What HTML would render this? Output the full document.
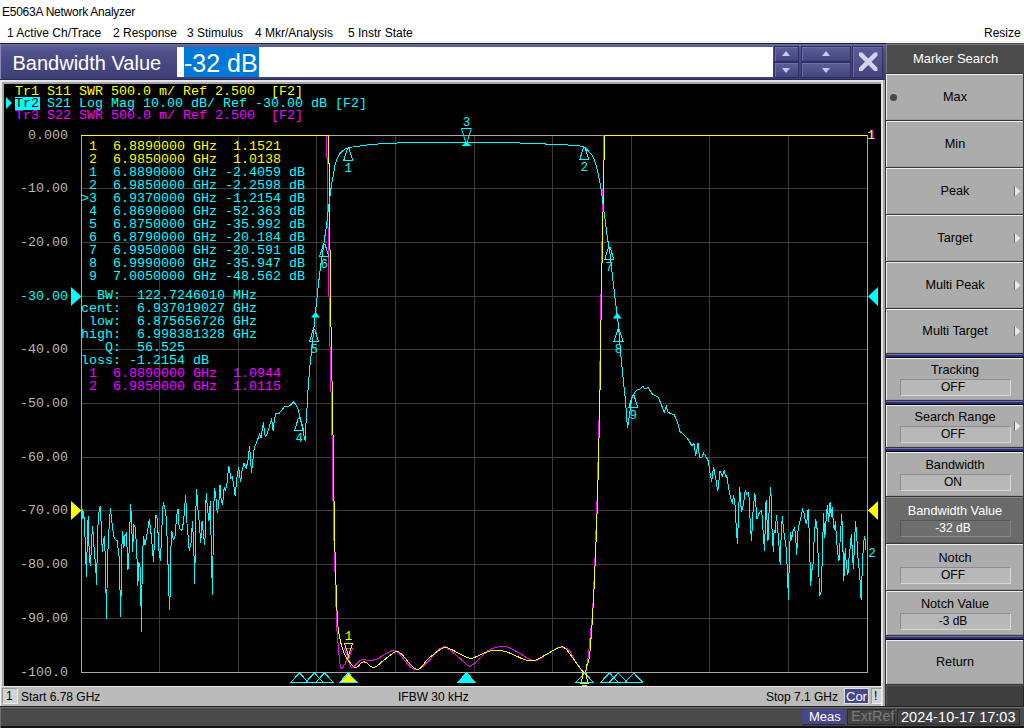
<!DOCTYPE html>
<html><head><meta charset="utf-8">
<style>
*{margin:0;padding:0;box-sizing:border-box}
html,body{width:1024px;height:728px;overflow:hidden;background:#fff;font-family:"Liberation Sans",sans-serif}
.a{position:absolute;white-space:pre}
#bar{position:absolute;left:0;top:43px;width:886px;height:37px;background:linear-gradient(#7070a8 0,#5c5c96 2px,#50508a 8px,#3e3e76 100%);border-top:1px solid #1a1a2a;border-bottom:1px solid #2a2a5a;box-shadow:inset 1px 0 0 #8a8abf}
.sp{position:absolute;background:linear-gradient(#5c5c98,#44447e);border:1px solid #2e2e60;box-shadow:inset 1px 1px 0 #6e6eaa}
.tri-u{position:absolute;width:0;height:0;border-left:4px solid transparent;border-right:4px solid transparent;border-bottom:5px solid #c8c8ea}
.tri-d{position:absolute;width:0;height:0;border-left:4px solid transparent;border-right:4px solid transparent;border-top:5px solid #c8c8ea}
#frame{position:absolute;left:0;top:79px;width:886px;height:628px;background:#e6e6e6}
#chart{position:absolute;left:4px;top:84px;width:877px;height:602px;background:#000;overflow:hidden}
#status{position:absolute;left:0;top:686px;width:881px;height:20px;background:#bbbbbb;border-top:1px solid #e8e8e8;border-left:1px solid #f4f4f4}
#bottom{position:absolute;left:0;top:706px;width:1024px;height:22px;background:#4a4a4a;border-top:1px solid #202020;box-shadow:inset 0 1px 0 #6e6e6e, inset 1px 0 0 #707070, inset 0 -2px 0 #141414}
#panel{position:absolute;left:886px;top:43px;width:138px;height:663px;background:#454545}
.btn{position:absolute;left:0;width:137px;background:#a9a9a9;border-top:1px solid #e0e0e0;border-left:1px solid #d8d8d8;border-bottom:2px solid #303030;border-right:1px solid #303030;color:#000;font-size:13px;text-align:center}
.sep{position:absolute;left:0;width:138px;height:5px;background:#4a4a98;border-top:1px solid #1a1a30;border-bottom:1px solid #1a1a30}
.val{position:absolute;left:14px;width:110px;height:17px;background:#b8b8b8;border-top:1px solid #8c8c8c;border-left:1px solid #8c8c8c;border-bottom:1px solid #d4d4d4;border-right:1px solid #d4d4d4;font-size:13px;line-height:15px;text-align:center}
.arr{position:absolute;right:3px;width:0;height:0;border-top:5px solid transparent;border-bottom:5px solid transparent;border-left:7px solid #e8e8e8}
</style></head><body>
<div class="a" style="left:2px;top:5px;font-size:12px;letter-spacing:-0.25px;color:#000">E5063A Network Analyzer</div>
<div class="a" style="left:7px;top:26px;font-size:12px;color:#000">1 Active Ch/Trace</div>
<div class="a" style="left:113px;top:26px;font-size:12px;color:#000">2 Response</div>
<div class="a" style="left:187px;top:26px;font-size:12px;color:#000">3 Stimulus</div>
<div class="a" style="left:255px;top:26px;font-size:12px;color:#000">4 Mkr/Analysis</div>
<div class="a" style="left:348px;top:26px;font-size:12px;color:#000">5 Instr State</div>
<div class="a" style="left:984px;top:26px;font-size:12px;color:#000">Resize</div>
<div style="position:absolute;left:0;top:41px;width:1024px;height:1px;background:#ececec"></div><div style="position:absolute;left:0;top:43px;width:1024px;height:1px;background:#101010"></div>

<div id="frame"></div>
<div style="position:absolute;left:2px;top:82px;width:879px;height:604px;background:#a6a6a6"></div>
<div style="position:absolute;left:883px;top:80px;width:2px;height:626px;background:#a6a6a6"></div>
<div style="position:absolute;left:885px;top:78px;width:1px;height:628px;background:#303030"></div>
<div id="bar"></div>
<div class="a" style="left:12.5px;top:51.5px;font-size:20px;color:#fff">Bandwidth Value</div>
<div style="position:absolute;left:177px;top:47px;width:596px;height:30px;background:#fff"></div>
<div style="position:absolute;left:184px;top:47px;width:75px;height:30px;background:#0078d7"></div>
<div class="a" style="left:184px;top:49px;font-size:25px;color:#fff">-32 dB</div>
<div class="sp" style="left:774px;top:46px;width:25px;height:16px"></div>
<div class="sp" style="left:774px;top:62px;width:25px;height:16px"></div>
<div class="sp" style="left:801px;top:46px;width:50px;height:16px"></div>
<div class="sp" style="left:801px;top:62px;width:50px;height:16px"></div>
<div class="tri-u" style="left:782px;top:51px"></div>
<div class="tri-d" style="left:782px;top:68px"></div>
<div class="tri-u" style="left:821.5px;top:51px"></div>
<div class="tri-d" style="left:821.5px;top:68px"></div>
<div class="sp" style="left:852px;top:46px;width:31px;height:32px"></div>
<svg style="position:absolute;left:852px;top:46px" width="31" height="32"><path d="M7 6.5H10.2L25.5 21.8V25H22.3L7 9.7Z M22.3 6.5H25.5V9.7L10.2 25H7V21.8Z" fill="#d4d4ee"/></svg>

<svg style="position:absolute;left:4px;top:84px" width="877" height="602" viewBox="4 84 877 602">
<rect x="4" y="84" width="877" height="602" fill="#000"/>
<path d="M159.5 135V672 M238.5 135V672 M316.5 135V672 M395.5 135V672 M474.5 135V672 M552.5 135V672 M631.5 135V672 M709.5 135V672 M788.5 135V672 M81 188.5H867 M81 242.5H867 M81 296.5H867 M81 349.5H867 M81 403.5H867 M81 457.5H867 M81 510.5H867 M81 564.5H867 M81 618.5H867" stroke="#3c3c3c" stroke-width="1" fill="none" shape-rendering="crispEdges"/>
<rect x="81.5" y="135.5" width="786" height="537" stroke="#a8a8a8" stroke-width="1" fill="none" shape-rendering="crispEdges"/>
<text x="68" y="139" text-anchor="end" fill="#b8b8b8" font-family="Liberation Mono" font-size="13.33">0.000</text>
<text x="68" y="192" text-anchor="end" fill="#b8b8b8" font-family="Liberation Mono" font-size="13.33">-10.00</text>
<text x="68" y="246" text-anchor="end" fill="#b8b8b8" font-family="Liberation Mono" font-size="13.33">-20.00</text>
<text x="68" y="300" text-anchor="end" fill="#00ffff" font-family="Liberation Mono" font-size="13.33">-30.00</text>
<text x="68" y="353" text-anchor="end" fill="#b8b8b8" font-family="Liberation Mono" font-size="13.33">-40.00</text>
<text x="68" y="407" text-anchor="end" fill="#b8b8b8" font-family="Liberation Mono" font-size="13.33">-50.00</text>
<text x="68" y="461" text-anchor="end" fill="#b8b8b8" font-family="Liberation Mono" font-size="13.33">-60.00</text>
<text x="68" y="514" text-anchor="end" fill="#b8b8b8" font-family="Liberation Mono" font-size="13.33">-70.00</text>
<text x="68" y="568" text-anchor="end" fill="#b8b8b8" font-family="Liberation Mono" font-size="13.33">-80.00</text>
<text x="68" y="622" text-anchor="end" fill="#b8b8b8" font-family="Liberation Mono" font-size="13.33">-90.00</text>
<text x="68" y="676" text-anchor="end" fill="#b8b8b8" font-family="Liberation Mono" font-size="13.33">-100.0</text>
<rect x="15" y="97" width="25" height="13" fill="#00ffff"/>
<path d="M6 97L12 103L6 109Z" fill="#00ffff"/>
<text x="15" y="95" fill="#ffff00" font-family="Liberation Mono" font-size="13.33" xml:space="preserve">Tr1 S11 SWR 500.0 m/ Ref 2.500  [F2]</text>
<text x="15" y="107" fill="#000" font-family="Liberation Mono" font-size="13.33" xml:space="preserve">Tr2</text>
<text x="15" y="107" fill="#00ffff" font-family="Liberation Mono" font-size="13.33" xml:space="preserve">    S21 Log Mag 10.00 dB/ Ref -30.00 dB [F2]</text>
<text x="15" y="119" fill="#ff00ff" font-family="Liberation Mono" font-size="13.33" xml:space="preserve">Tr3 S22 SWR 500.0 m/ Ref 2.500  [F2]</text>
<text x="81" y="150.0" fill="#ffff00" font-family="Liberation Mono" font-size="13.33" xml:space="preserve"> 1  6.8890000 GHz  1.1521</text>
<text x="81" y="162.9" fill="#ffff00" font-family="Liberation Mono" font-size="13.33" xml:space="preserve"> 2  6.9850000 GHz  1.0138</text>
<text x="81" y="175.9" fill="#00ffff" font-family="Liberation Mono" font-size="13.33" xml:space="preserve"> 1  6.8890000 GHz -2.4059 dB</text>
<text x="81" y="188.8" fill="#00ffff" font-family="Liberation Mono" font-size="13.33" xml:space="preserve"> 2  6.9850000 GHz -2.2598 dB</text>
<text x="81" y="201.8" fill="#00ffff" font-family="Liberation Mono" font-size="13.33" xml:space="preserve">>3  6.9370000 GHz -1.2154 dB</text>
<text x="81" y="214.8" fill="#00ffff" font-family="Liberation Mono" font-size="13.33" xml:space="preserve"> 4  6.8690000 GHz -52.363 dB</text>
<text x="81" y="227.7" fill="#00ffff" font-family="Liberation Mono" font-size="13.33" xml:space="preserve"> 5  6.8750000 GHz -35.992 dB</text>
<text x="81" y="240.6" fill="#00ffff" font-family="Liberation Mono" font-size="13.33" xml:space="preserve"> 6  6.8790000 GHz -20.184 dB</text>
<text x="81" y="253.6" fill="#00ffff" font-family="Liberation Mono" font-size="13.33" xml:space="preserve"> 7  6.9950000 GHz -20.591 dB</text>
<text x="81" y="266.6" fill="#00ffff" font-family="Liberation Mono" font-size="13.33" xml:space="preserve"> 8  6.9990000 GHz -35.947 dB</text>
<text x="81" y="279.5" fill="#00ffff" font-family="Liberation Mono" font-size="13.33" xml:space="preserve"> 9  7.0050000 GHz -48.562 dB</text>
<text x="81" y="299.0" fill="#00ffff" font-family="Liberation Mono" font-size="13.33" xml:space="preserve">  BW:  122.7246010 MHz</text>
<text x="81" y="311.9" fill="#00ffff" font-family="Liberation Mono" font-size="13.33" xml:space="preserve">cent:  6.937019027 GHz</text>
<text x="81" y="324.9" fill="#00ffff" font-family="Liberation Mono" font-size="13.33" xml:space="preserve"> low:  6.875656726 GHz</text>
<text x="81" y="337.8" fill="#00ffff" font-family="Liberation Mono" font-size="13.33" xml:space="preserve">high:  6.998381328 GHz</text>
<text x="81" y="350.7" fill="#00ffff" font-family="Liberation Mono" font-size="13.33" xml:space="preserve">   Q:  56.525</text>
<text x="81" y="363.6" fill="#00ffff" font-family="Liberation Mono" font-size="13.33" xml:space="preserve">loss: -1.2154 dB</text>
<text x="81" y="376.6" fill="#ff00ff" font-family="Liberation Mono" font-size="13.33" xml:space="preserve"> 1  6.8890000 GHz  1.0944</text>
<text x="81" y="389.5" fill="#ff00ff" font-family="Liberation Mono" font-size="13.33" xml:space="preserve"> 2  6.9850000 GHz  1.0115</text>
<path d="M71 287L81.5 296.5L71 306Z" fill="#00ffff"/>
<path d="M878 287L868 296.5L878 306Z" fill="#00ffff"/>
<path d="M71 501L81.5 510.5L71 520Z" fill="#ffff00"/>
<path d="M878 501L868 510.5L878 520Z" fill="#ffff00"/>
<polyline points="81.0,135.5 326.7,135.5 329.2,310.0 332.1,440.0 332.2,447.3 332.3,457.4 332.5,469.3 332.7,482.1 332.9,494.6 333.1,506.0 333.3,516.3 333.6,526.5 333.9,536.5 334.2,546.3 334.5,555.9 334.8,565.3 335.1,574.8 335.3,584.3 335.6,593.7 335.9,602.6 336.1,610.8 336.4,618.0 336.7,624.0 336.9,628.9 337.2,633.0 337.5,636.8 337.8,640.5 338.1,644.4 338.5,648.7 338.8,653.3 339.3,657.8 339.7,661.9 340.2,665.2 340.7,667.5 341.3,668.5 342.0,668.5 342.7,667.7 343.4,666.5 344.1,665.2 344.7,664.2 345.3,663.1 345.9,661.6 346.4,660.1 346.9,658.7 347.5,657.8 348.0,657.6 348.5,658.5 349.0,660.2 349.4,662.4 350.0,664.7 350.6,666.5 351.3,667.5 352.2,667.5 353.3,666.9 354.5,665.9 355.8,664.6 356.9,663.5 357.9,662.6 358.7,661.9 359.3,661.3 359.9,660.7 360.5,660.2 361.1,659.9 362.0,659.6 363.1,659.6 364.3,659.7 365.7,660.0 367.1,660.3 368.5,660.5 369.8,660.5 371.1,660.4 372.3,660.3 373.5,660.0 374.8,659.7 376.2,659.2 377.7,658.6 379.5,657.7 381.5,656.4 383.6,655.1 385.6,653.7 387.6,652.6 389.4,651.8 390.8,651.2 391.9,650.6 392.8,650.2 393.9,650.2 395.3,650.7 397.2,651.8 399.7,654.2 402.7,658.0 406.0,662.2 409.5,666.1 413.1,669.0 416.7,669.9 420.6,668.4 424.8,664.9 429.2,660.3 433.4,655.4 437.1,651.2 440.2,648.4 442.4,647.1 443.8,646.6 444.8,646.6 445.7,647.2 446.6,647.9 448.0,648.8 449.8,649.9 451.8,651.5 454.0,653.3 456.2,655.2 458.2,657.0 460.0,658.6 461.6,660.0 463.1,661.3 464.4,662.6 465.6,663.7 466.8,664.7 467.8,665.4 468.6,665.9 469.2,666.2 469.8,666.2 470.3,666.2 470.9,665.9 471.7,665.4 472.8,664.7 473.9,663.7 475.2,662.5 476.6,661.3 478.0,659.9 479.5,658.6 481.0,657.2 482.6,655.6 484.3,654.0 486.0,652.4 487.6,650.9 489.3,649.8 491.0,648.9 492.6,648.3 494.3,647.8 496.0,647.4 497.6,647.1 499.1,646.9 500.5,646.7 501.7,646.5 502.9,646.4 504.1,646.4 505.4,646.5 506.9,646.9 508.6,647.5 510.6,648.4 512.6,649.4 514.7,650.5 516.7,651.7 518.6,652.7 520.4,653.7 522.1,654.8 523.7,655.9 525.4,656.9 526.9,657.8 528.4,658.6 529.8,659.2 531.0,659.9 532.2,660.3 533.4,660.7 534.7,660.7 536.2,660.5 537.9,659.9 539.9,658.8 541.9,657.6 544.0,656.2 546.0,654.9 547.9,653.7 549.7,652.6 551.5,651.5 553.2,650.4 554.8,649.4 556.3,648.5 557.7,647.9 558.9,647.5 559.9,647.4 560.8,647.4 561.7,647.5 562.6,647.7 563.5,647.9 564.5,648.1 565.4,648.3 566.3,648.5 567.3,648.9 568.3,649.7 569.4,650.8 570.6,652.5 571.9,654.8 573.2,657.3 574.5,660.0 575.9,662.4 577.2,664.5 578.6,666.4 580.0,668.3 581.4,670.1 582.8,671.5 584.0,672.3 585.0,672.3 585.8,671.4 586.3,669.9 586.8,667.8 587.1,665.1 587.5,662.0 587.9,658.6 588.4,654.6 588.9,650.0 589.4,644.9 589.9,639.6 590.4,634.4 590.9,629.3 591.3,625.1 591.7,621.9 592.0,618.6 592.4,614.4 592.7,608.5 593.2,600.0 593.7,588.4 594.3,574.4 595.0,558.7 595.6,541.9 596.2,524.8 596.8,508.0 597.3,490.2 597.8,470.4 598.3,450.2 598.8,431.4 599.1,415.5 599.4,404.0 600.9,300.0 604.0,135.5 867.0,135.5" stroke="#ff00ff" stroke-width="1" fill="none" shape-rendering="crispEdges"/>
<polyline points="81.0,135.5 328.7,135.5 330.7,310.0 333.1,440.0 333.2,447.3 333.3,457.4 333.5,469.3 333.7,482.1 333.9,494.6 334.1,506.0 334.3,516.3 334.5,526.5 334.7,536.5 334.9,546.3 335.1,555.9 335.4,565.3 335.7,574.8 336.0,584.6 336.3,594.1 336.7,603.1 337.0,611.2 337.4,618.0 337.7,623.2 338.0,627.2 338.4,630.2 338.7,632.7 339.2,635.1 339.7,637.8 340.4,640.8 341.1,643.8 341.9,646.7 342.8,649.4 343.7,652.0 344.7,654.3 345.7,656.4 346.8,658.3 348.0,660.1 349.2,661.6 350.3,663.0 351.3,664.2 352.2,665.2 353.0,666.1 353.8,666.8 354.6,667.3 355.4,667.5 356.2,667.5 357.1,667.1 358.1,666.3 359.2,665.2 360.2,664.1 361.1,663.1 362.0,662.5 362.7,662.2 363.3,661.9 363.8,661.9 364.4,662.0 365.0,662.2 365.9,662.5 367.0,663.2 368.2,664.2 369.5,665.4 370.9,666.5 372.3,667.2 373.8,667.4 375.3,667.0 376.8,666.0 378.4,664.8 380.1,663.4 381.7,661.9 383.5,660.5 385.4,659.0 387.5,657.3 389.6,655.6 391.7,654.0 393.6,652.7 395.2,651.8 396.4,651.3 397.2,651.1 397.9,651.2 398.6,651.7 399.6,652.5 401.1,653.7 403.2,655.8 405.7,658.9 408.5,662.3 411.4,665.5 414.2,668.1 416.7,669.3 418.9,669.0 420.8,667.7 422.7,665.6 424.5,663.1 426.4,660.7 428.4,658.6 430.6,656.7 433.0,654.8 435.5,652.8 437.9,651.0 440.1,649.5 442.1,648.4 443.6,647.8 444.8,647.4 445.8,647.4 446.8,647.7 448.1,648.1 449.9,648.8 452.4,649.9 455.4,651.5 458.7,653.3 462.0,655.1 465.0,656.6 467.5,657.6 469.4,658.1 470.8,658.3 471.9,658.2 473.0,657.9 474.2,657.5 475.6,657.0 477.4,656.4 479.3,655.5 481.3,654.4 483.4,653.4 485.4,652.5 487.3,651.8 489.0,651.3 490.6,650.9 492.2,650.6 493.8,650.5 495.4,650.4 497.1,650.4 498.9,650.5 500.7,650.7 502.6,651.0 504.5,651.5 506.6,652.0 508.8,652.7 511.3,653.7 514.0,654.9 516.8,656.2 519.6,657.6 522.2,658.7 524.5,659.6 526.4,660.2 528.1,660.6 529.6,660.8 531.0,660.9 532.5,660.8 534.2,660.5 536.0,659.9 537.9,659.1 539.8,658.1 541.8,657.0 543.8,655.8 545.9,654.7 548.2,653.5 550.6,652.0 553.1,650.5 555.5,649.2 557.7,648.0 559.6,647.3 561.0,646.9 562.1,646.8 562.9,647.0 563.7,647.4 564.5,648.0 565.5,648.8 566.7,649.9 568.0,651.4 569.3,653.1 570.6,655.0 572.0,656.8 573.3,658.6 574.6,660.4 576.0,662.4 577.4,664.4 578.8,666.3 580.0,668.0 581.1,669.3 582.0,670.4 582.8,671.3 583.4,672.0 584.0,672.4 584.5,672.5 585.0,672.3 585.4,671.6 585.8,670.6 586.1,669.2 586.4,667.6 586.7,666.0 587.0,664.5 587.4,663.5 587.8,663.0 588.2,662.5 588.6,661.3 589.1,659.0 589.6,654.9 590.2,649.1 590.7,642.2 591.4,634.1 592.0,624.8 592.7,614.3 593.3,602.7 594.0,589.6 594.6,574.9 595.3,559.0 596.0,542.4 596.6,525.5 597.2,508.8 597.7,490.8 598.3,470.9 598.7,450.7 599.2,431.9 599.5,415.9 599.8,404.4 601.3,300.0 604.5,135.5 867.0,135.5" stroke="#ffff00" stroke-width="1" fill="none" shape-rendering="crispEdges"/>
<polyline points="81.1,510.6 81.7,525.1 82.5,509.6 83.8,513.7 84.8,531.2 85.8,560.1 86.7,576.6 87.3,531.2 88.3,515.8 89.3,558.0 90.4,566.3 91.4,547.7 92.4,526.1 93.5,537.4 94.5,556.0 95.5,562.2 96.6,584.8 97.6,533.3 98.6,513.7 100.3,506.1 101.1,523.0 102.3,551.9 103.2,541.5 104.4,536.4 105.4,560.1 106.5,618.9 107.5,560.1 108.9,531.2 110.4,508.1 112.0,523.0 113.5,535.4 115.1,539.5 117.2,540.5 119.2,558.0 120.7,616.8 121.7,549.8 122.7,531.2 123.8,547.7 125.0,535.4 126.5,533.3 127.9,570.4 129.1,551.9 130.6,504.0 131.6,520.9 132.6,551.9 133.7,525.1 135.3,527.1 136.8,551.9 137.8,585.9 138.8,562.2 140.3,568.4 141.5,632.3 142.3,558.0 143.6,536.4 145.0,544.6 146.5,537.4 148.1,527.1 149.3,518.9 150.6,529.2 152.2,545.7 153.5,562.2 154.7,533.3 155.9,514.7 157.4,518.9 158.8,549.8 160.5,561.1 161.7,531.2 163.2,502.4 164.6,506.5 166.2,516.8 167.7,551.9 168.7,591.0 169.8,609.6 170.8,549.8 171.8,531.2 173.3,539.5 174.9,537.4 176.6,516.8 178.0,508.6 178.7,523.4 180.1,528.9 182.0,530.3 183.7,520.7 185.6,494.6 187.0,523.4 188.4,539.9 189.2,550.9 191.1,542.6 192.5,520.7 193.9,550.9 194.7,583.8 195.8,512.4 196.6,489.1 198.0,509.7 199.4,523.4 200.7,542.6 202.1,520.7 203.5,534.4 204.8,545.4 206.2,493.2 207.6,509.7 209.0,520.7 210.3,501.4 211.7,567.4 212.5,594.8 213.6,512.4 214.5,487.7 215.8,495.9 217.2,512.4 218.6,506.9 220.0,484.9 221.3,501.4 222.7,504.2 224.1,487.7 225.5,490.4 226.8,484.9 228.7,465.7 230.9,478.1 232.3,476.7 233.7,484.9 235.1,495.9 237.0,476.7 238.6,467.1 240.6,482.2 241.9,471.2 244.1,463.0 246.1,468.5 248.0,460.2 249.6,446.5 251.5,472.6 254.3,447.3 255.8,444.4 258.7,436.7 259.6,434.3 261.1,438.2 262.0,431.0 263.5,422.3 264.4,432.4 265.4,436.2 266.8,434.3 269.2,427.1 271.6,418.5 273.1,430.5 274.0,423.3 275.5,413.7 279.3,413.2 284.6,406.4 289.4,406.0 293.8,401.6 298.1,408.8 300.0,417.5 302.4,427.1 303.8,434.8 305.3,440.6 305.8,426.2 307.2,405.0 307.7,394.4 309.9,366.0 312.0,347.4 314.0,326.8 315.5,312.4 318.5,283.3 318.8,281.1 319.2,278.1 319.6,274.5 320.1,270.7 320.6,266.9 321.0,263.5 321.4,260.5 321.8,257.6 322.3,254.7 322.7,251.9 323.1,249.1 323.5,246.2 323.9,243.4 324.3,240.5 324.7,237.7 325.1,234.9 325.6,231.9 326.0,228.9 326.4,225.8 326.8,222.5 327.2,219.2 327.6,215.8 328.0,212.5 328.4,209.1 328.8,205.8 329.3,202.4 329.7,198.9 330.1,195.6 330.5,192.4 330.9,189.3 331.3,186.6 331.7,183.9 332.1,181.5 332.6,179.1 333.0,176.8 333.4,174.5 333.8,172.3 334.2,170.0 334.5,167.9 334.9,165.8 335.4,163.9 335.9,162.1 336.4,160.5 337.0,159.1 337.6,157.7 338.2,156.5 338.9,155.3 339.6,154.2 340.3,153.2 341.1,152.3 342.0,151.5 342.8,150.8 343.7,150.1 344.5,149.5 345.3,149.0 346.1,148.6 346.8,148.3 347.6,148.1 348.5,147.8 349.5,147.6 350.5,147.3 351.5,147.1 352.6,147.0 353.8,146.8 355.2,146.6 356.6,146.4 358.3,146.2 360.0,146.0 361.9,145.7 363.9,145.4 366.0,145.1 368.4,144.9 370.8,144.6 373.4,144.4 376.2,144.2 379.1,143.9 382.4,143.7 385.9,143.5 389.6,143.3 393.4,143.2 397.4,143.0 401.9,142.9 407.1,142.7 413.3,142.6 420.8,142.6 429.7,142.5 439.2,142.4 448.9,142.4 458.0,142.4 466.0,142.3 472.3,142.3 477.4,142.2 481.9,142.2 486.7,142.1 492.5,142.2 500.0,142.3 510.3,142.7 522.9,143.1 536.4,143.6 549.7,144.2 561.3,144.7 570.0,145.1 575.3,145.4 578.3,145.7 579.6,145.9 580.0,146.1 580.2,146.3 581.0,146.5 582.1,146.7 582.9,146.8 583.5,147.0 584.0,147.2 584.5,147.5 585.1,147.9 585.8,148.4 586.5,149.0 587.2,149.7 587.9,150.4 588.5,151.2 589.2,152.0 589.9,152.8 590.7,153.6 591.4,154.5 592.1,155.4 592.7,156.4 593.4,157.5 593.9,158.7 594.4,159.9 594.8,161.2 595.2,162.7 595.7,164.1 596.1,165.7 596.6,167.4 597.0,169.1 597.5,171.0 598.0,172.8 598.4,174.8 598.8,176.7 599.2,178.7 599.6,180.6 600.0,182.6 600.4,184.7 600.7,186.8 601.0,189.1 601.4,191.4 601.7,193.8 602.0,196.4 602.3,198.9 602.6,201.5 603.0,204.2 603.3,206.8 603.7,209.6 604.0,212.3 604.4,215.1 604.8,217.9 605.2,220.7 605.5,223.4 605.9,226.3 606.3,229.1 606.6,231.9 607.0,234.6 607.4,237.1 607.7,239.6 608.1,241.9 608.5,244.2 608.9,246.4 609.2,248.6 609.6,250.9 609.9,253.1 610.1,255.3 610.4,257.4 610.6,259.6 610.9,262.0 611.2,264.6 611.5,267.5 611.9,270.7 612.3,274.1 612.7,277.4 613.0,280.7 613.4,283.8 613.7,286.8 614.1,289.5 614.4,292.3 614.7,294.9 615.0,297.6 615.3,300.3 615.7,303.2 616.0,306.3 616.4,309.4 616.7,312.3 617.0,314.8 617.3,316.8 617.4,318.0 617.5,318.5 617.6,318.6 617.7,318.7 617.7,319.0 617.9,320.0 618.0,321.5 618.2,323.4 618.4,325.6 618.6,327.9 618.8,330.5 619.0,333.2 619.2,336.1 619.5,339.4 619.8,342.9 620.1,346.4 620.4,349.8 620.7,352.9 620.9,355.9 621.2,358.7 621.5,361.4 621.7,364.1 622.0,366.7 622.3,369.4 622.6,372.2 622.8,374.9 623.1,377.7 623.4,380.4 623.7,383.2 623.9,385.9 624.2,388.6 624.5,391.4 624.8,394.1 625.1,396.9 625.3,399.6 625.6,402.4 625.8,405.2 626.0,408.1 626.2,411.1 626.4,413.9 626.6,416.5 626.7,418.8 626.9,420.9 627.1,422.8 627.2,424.4 627.4,425.8 627.5,427.0 627.6,427.9 628.9,418.8 630.5,407.3 632.2,397.4 634.7,392.5 637.1,390.0 639.6,389.2 642.6,386.2 644.5,388.4 648.2,387.9 650.3,390.8 652.4,394.1 654.4,395.5 658.0,396.6 661.0,404.0 664.3,412.3 666.3,406.5 667.6,411.4 669.6,413.1 674.2,414.7 677.5,422.1 680.0,432.0 678.7,431.0 681.5,432.4 684.2,435.1 687.0,437.9 689.7,442.0 691.9,446.1 693.9,443.4 695.8,455.7 698.0,443.4 699.4,457.1 702.1,457.1 703.5,453.0 706.2,457.1 708.4,461.2 710.3,474.9 711.7,481.8 713.6,466.7 715.8,479.1 717.8,491.4 720.0,470.8 722.2,476.3 724.1,470.8 726.3,477.7 726.8,474.9 728.2,485.9 730.4,496.9 732.3,502.4 733.7,495.5 735.1,505.2 736.4,529.9 737.5,543.6 738.6,510.7 739.7,487.3 741.4,512.0 743.3,505.2 745.2,490.1 746.9,494.2 748.8,492.8 750.2,521.6 751.5,540.9 752.9,513.4 754.8,492.8 757.0,518.9 758.4,514.8 759.8,512.0 761.7,510.7 763.4,535.4 764.5,550.5 766.1,499.7 768.0,540.9 769.4,502.4 770.8,487.3 772.2,535.4 773.5,551.9 774.1,529.8 775.1,531.9 776.5,515.4 777.8,529.8 779.2,548.4 780.2,564.8 781.3,531.9 782.3,516.4 783.3,527.7 784.8,538.0 786.4,550.4 787.5,575.2 788.5,599.9 789.5,548.4 790.6,531.9 791.6,540.1 792.6,531.9 793.6,529.8 794.7,527.7 795.7,538.0 796.7,554.5 797.8,531.9 798.8,525.7 800.9,517.4 802.5,509.2 804.0,513.3 805.4,521.5 806.6,523.6 808.1,509.2 809.1,529.8 810.1,564.8 810.8,585.5 811.6,569.0 812.8,569.0 814.3,536.0 815.7,519.5 816.9,525.7 817.8,548.4 819.0,577.2 819.8,595.8 821.1,591.6 822.5,552.5 823.5,513.3 824.8,538.0 826.0,521.5 827.3,505.1 828.7,521.5 830.1,502.0 831.4,517.4 832.2,507.1 833.4,523.6 834.3,529.8 835.5,521.5 836.3,536.0 837.6,552.5 839.0,560.7 840.5,533.9 841.7,514.3 842.5,531.9 843.8,581.3 845.2,548.4 846.2,562.8 847.9,575.2 848.7,560.7 849.9,550.4 851.4,533.9 852.4,552.5 853.4,569.0 854.5,544.2 855.5,521.5 856.5,531.9 858.2,560.7 859.6,573.1 861.1,599.9 862.3,569.0 863.5,542.2 864.8,536.0 865.8,550.4" stroke="#00ffff" stroke-width="1" fill="none" shape-rendering="crispEdges"/>
<path d="M347.4 148.5H349.0L352.7 160.5H343.7Z" stroke="#00ffff" stroke-width="1" fill="none" shape-rendering="crispEdges"/><text x="348.2" y="172" text-anchor="middle" fill="#00ffff" font-family="Liberation Mono" font-size="12.5">1</text>
<path d="M583.5 147.5H585.0999999999999L588.8 159.5H579.8Z" stroke="#00ffff" stroke-width="1" fill="none" shape-rendering="crispEdges"/><text x="584.3" y="171" text-anchor="middle" fill="#00ffff" font-family="Liberation Mono" font-size="12.5">2</text>
<path d="M298.4 418.0H300.0L303.7 430.0H294.7Z" stroke="#00ffff" stroke-width="1" fill="none" shape-rendering="crispEdges"/><text x="299.2" y="441.5" text-anchor="middle" fill="#00ffff" font-family="Liberation Mono" font-size="12.5">4</text>
<path d="M313.2 329.5H314.8L318.5 341.5H309.5Z" stroke="#00ffff" stroke-width="1" fill="none" shape-rendering="crispEdges"/><text x="314" y="353" text-anchor="middle" fill="#00ffff" font-family="Liberation Mono" font-size="12.5">5</text>
<path d="M323.4 244.2H325.0L328.7 256.2H319.7Z" stroke="#00ffff" stroke-width="1" fill="none" shape-rendering="crispEdges"/><text x="324.2" y="267.7" text-anchor="middle" fill="#00ffff" font-family="Liberation Mono" font-size="12.5">6</text>
<path d="M608.5 247.3H610.0999999999999L613.8 259.3H604.8Z" stroke="#00ffff" stroke-width="1" fill="none" shape-rendering="crispEdges"/><text x="609.3" y="270.8" text-anchor="middle" fill="#00ffff" font-family="Liberation Mono" font-size="12.5">7</text>
<path d="M617.7 329.5H619.3L623.0 341.5H614.0Z" stroke="#00ffff" stroke-width="1" fill="none" shape-rendering="crispEdges"/><text x="618.5" y="353" text-anchor="middle" fill="#00ffff" font-family="Liberation Mono" font-size="12.5">8</text>
<path d="M632.5 395.5H634.0999999999999L637.8 407.5H628.8Z" stroke="#00ffff" stroke-width="1" fill="none" shape-rendering="crispEdges"/><text x="633.3" y="419" text-anchor="middle" fill="#00ffff" font-family="Liberation Mono" font-size="12.5">9</text>
<path d="M466.4 144.5L461.5 128.5H471.3Z" stroke="#00ffff" stroke-width="1" fill="none"/>
<path d="M466.4 141.5L461.5 146H471.3Z" fill="#00ffff"/>
<text x="466.4" y="126" text-anchor="middle" fill="#00ffff" font-family="Liberation Mono" font-size="12.5">3</text>
<path d="M315.5 312L311 317.5H320Z" fill="#00ffff"/>
<path d="M617.3 313L612.8 318.5H621.8Z" fill="#00ffff"/>
<path d="M348.5 659L344.5 648.5H352.5Z" stroke="#ff00ff" stroke-width="1" fill="none" shape-rendering="crispEdges"/>
<path d="M348.5 656L344.5 643H352.5Z" stroke="#ffff00" stroke-width="1" fill="none" shape-rendering="crispEdges"/>
<text x="348.5" y="640" text-anchor="middle" fill="#ffff00" font-family="Liberation Mono" font-size="12.5">1</text>
<text x="872" y="139" text-anchor="middle" fill="#ff00ff" font-family="Liberation Mono" font-size="12.5">1</text>
<text x="871" y="139" text-anchor="middle" fill="#ffff00" font-family="Liberation Mono" font-size="12.5">1</text>
<text x="872" y="557" text-anchor="middle" fill="#00ffff" font-family="Liberation Mono" font-size="12.5">2</text>
<path d="M299.5 673L290.5 682.5H308.5Z" stroke="#00ffff" stroke-width="1" fill="none" shape-rendering="crispEdges"/>
<path d="M314.4 673L305.4 682.5H323.4Z" stroke="#00ffff" stroke-width="1" fill="none" shape-rendering="crispEdges"/>
<path d="M324.5 673L315.5 682.5H333.5Z" stroke="#00ffff" stroke-width="1" fill="none" shape-rendering="crispEdges"/>
<path d="M609.4 673L600.4 682.5H618.4Z" stroke="#00ffff" stroke-width="1" fill="none" shape-rendering="crispEdges"/>
<path d="M618.2 673L609.2 682.5H627.2Z" stroke="#00ffff" stroke-width="1" fill="none" shape-rendering="crispEdges"/>
<path d="M633.8 673L624.8 682.5H642.8Z" stroke="#00ffff" stroke-width="1" fill="none" shape-rendering="crispEdges"/>
<path d="M584.6 673L575.6 682.5H593.6Z" stroke="#00ffff" stroke-width="1" fill="none" shape-rendering="crispEdges"/>
<path d="M583 673L581.5 682.5M586 673L587.5 682.5M580 683.5H589" stroke="#ffff00" stroke-width="1" fill="none" shape-rendering="crispEdges"/>
<path d="M582 685.5H587" stroke="#ffc040" stroke-width="1" fill="none"/>
<path d="M348.4 673L339.4 682.5H357.4Z" stroke="#00ffff" stroke-width="1" fill="#ffff00" shape-rendering="crispEdges"/>
<path d="M466.5 673L457.5 682.5H475.5Z" stroke="#00ffff" stroke-width="1" fill="#00ffff" shape-rendering="crispEdges"/>
</svg>
<div id="status"></div>
<div style="position:absolute;left:2px;top:688px;width:16px;height:16px;background:#d2d2d2;border-top:1px solid #9a9a9a;border-left:1px solid #9a9a9a;border-bottom:1px solid #eeeeee;border-right:1px solid #eeeeee"></div>
<div class="a" style="left:6px;top:689px;font-size:12px;color:#000">1</div>
<div class="a" style="left:21px;top:690px;font-size:12px;color:#000">Start 6.78 GHz</div>
<div class="a" style="left:398px;top:690px;font-size:12px;color:#000">IFBW 30 kHz</div>
<div class="a" style="left:766px;top:690px;font-size:12px;color:#000">Stop 7.1 GHz</div>
<div style="position:absolute;left:844px;top:688px;width:25px;height:16px;background:#46468c;border:1px solid #e0e0e0"></div>
<div class="a" style="left:846px;top:689px;font-size:13px;color:#fff">Cor</div>
<div style="position:absolute;left:871px;top:688px;width:11px;height:16px;background:#d2d2d2;border-top:1px solid #9a9a9a;border-left:1px solid #9a9a9a;border-bottom:1px solid #eeeeee;border-right:1px solid #eeeeee"></div>
<div class="a" style="left:874px;top:689px;font-size:12px;color:#000">!</div>
<div id="bottom"></div>
<div style="position:absolute;left:802px;top:709px;width:43px;height:16px;background:#46468c;border-bottom:1px solid #2a2a2a"></div>
<div class="a" style="left:809px;top:709px;font-size:13px;color:#fff">Meas</div>
<div style="position:absolute;left:847px;top:709px;width:48px;height:16px;background:#434343;border:1px solid #2a2a2a"></div>
<div class="a" style="left:851px;top:708px;font-size:14.5px;color:#7a7a7a">ExtRef</div>
<div style="position:absolute;left:897px;top:709px;width:123px;height:16px;background:#434343;border:1px solid #2a2a2a"></div>
<div class="a" style="left:901px;top:708.5px;font-size:14.5px;color:#fff">2024-10-17 17:03</div>
<div id="panel"></div>
<div style="position:absolute;left:886px;top:0;width:138px;height:706px"><div style="position:absolute;left:0;top:73px;width:138px;height:633px;background:#383838"></div>
<div style="position:absolute;left:0;top:44px;width:138px;height:29px;background:#4b4b4b;border-top:1px solid #7a7a7a;border-left:1px solid #7a7a7a;color:#fff;font-size:13px;text-align:center;line-height:28px">Marker Search</div>
<div style="position:absolute;left:0;top:74px;width:137px;height:46px;background:#acacac;border-top:1px solid #f0f0f0;border-left:1px solid #f0f0f0;box-shadow:inset 0 -1px 0 #9c9c9c;color:#000;font-size:12.7px;text-align:center"><div style="position:absolute;left:0;right:0;top:14px;line-height:16px">Max</div><div style="position:absolute;left:3px;top:19px;width:7px;height:7px;border-radius:50%;background:#484848"></div></div>
<div style="position:absolute;left:0;top:121px;width:137px;height:46px;background:#acacac;border-top:1px solid #f0f0f0;border-left:1px solid #f0f0f0;box-shadow:inset 0 -1px 0 #9c9c9c;color:#000;font-size:12.7px;text-align:center"><div style="position:absolute;left:0;right:0;top:14px;line-height:16px">Min</div></div>
<div style="position:absolute;left:0;top:168px;width:137px;height:46px;background:#acacac;border-top:1px solid #f0f0f0;border-left:1px solid #f0f0f0;box-shadow:inset 0 -1px 0 #9c9c9c;color:#000;font-size:12.7px;text-align:center"><div style="position:absolute;left:0;right:0;top:14px;line-height:16px">Peak</div><svg style="position:absolute;left:126px;top:17px" width="9" height="11"><path d="M1.5 0.5V10" stroke="#6a6a6a"/><path d="M2 0.5L7.5 5.2L2 10Z" fill="#e8e8e8"/></svg></div>
<div style="position:absolute;left:0;top:215px;width:137px;height:46px;background:#acacac;border-top:1px solid #f0f0f0;border-left:1px solid #f0f0f0;box-shadow:inset 0 -1px 0 #9c9c9c;color:#000;font-size:12.7px;text-align:center"><div style="position:absolute;left:0;right:0;top:14px;line-height:16px">Target</div><svg style="position:absolute;left:126px;top:17px" width="9" height="11"><path d="M1.5 0.5V10" stroke="#6a6a6a"/><path d="M2 0.5L7.5 5.2L2 10Z" fill="#e8e8e8"/></svg></div>
<div style="position:absolute;left:0;top:262px;width:137px;height:46px;background:#acacac;border-top:1px solid #f0f0f0;border-left:1px solid #f0f0f0;box-shadow:inset 0 -1px 0 #9c9c9c;color:#000;font-size:12.7px;text-align:center"><div style="position:absolute;left:0;right:0;top:14px;line-height:16px">Multi Peak</div><svg style="position:absolute;left:126px;top:17px" width="9" height="11"><path d="M1.5 0.5V10" stroke="#6a6a6a"/><path d="M2 0.5L7.5 5.2L2 10Z" fill="#e8e8e8"/></svg></div>
<div style="position:absolute;left:0;top:309px;width:137px;height:44px;background:#acacac;border-top:1px solid #f0f0f0;border-left:1px solid #f0f0f0;box-shadow:inset 0 -1px 0 #9c9c9c;color:#000;font-size:12.7px;text-align:center"><div style="position:absolute;left:0;right:0;top:13px;line-height:16px">Multi Target</div><svg style="position:absolute;left:126px;top:16px" width="9" height="11"><path d="M1.5 0.5V10" stroke="#6a6a6a"/><path d="M2 0.5L7.5 5.2L2 10Z" fill="#e8e8e8"/></svg></div>
<div style="position:absolute;left:0;top:354px;width:137px;height:1px;background:#6a6acc"></div><div style="position:absolute;left:0;top:355px;width:137px;height:2px;background:#303068"></div><div style="position:absolute;left:0;top:357px;width:138px;height:1px;background:#000"></div>
<div style="position:absolute;left:0;top:358px;width:137px;height:42px;background:#acacac;border-top:1px solid #f0f0f0;border-left:1px solid #f0f0f0;box-shadow:inset 0 -1px 0 #9c9c9c;color:#000;font-size:12.7px;text-align:center"><div style="position:absolute;left:0;right:0;top:3px;line-height:16px">Tracking</div><div style="position:absolute;left:13px;top:20px;width:111px;height:17px;background:#b8b8b8;border-top:1px solid #8c8c8c;border-left:1px solid #8c8c8c;border-bottom:1px solid #d8d8d8;border-right:1px solid #d8d8d8;font-size:12px;line-height:15px;padding-right:5px">OFF</div></div>
<div style="position:absolute;left:0;top:401px;width:137px;height:1px;background:#6a6acc"></div><div style="position:absolute;left:0;top:402px;width:137px;height:2px;background:#303068"></div><div style="position:absolute;left:0;top:404px;width:138px;height:1px;background:#000"></div>
<div style="position:absolute;left:0;top:405px;width:137px;height:42px;background:#acacac;border-top:1px solid #f0f0f0;border-left:1px solid #f0f0f0;box-shadow:inset 0 -1px 0 #9c9c9c;color:#000;font-size:12.7px;text-align:center"><div style="position:absolute;left:0;right:0;top:3px;line-height:16px">Search Range</div><div style="position:absolute;left:13px;top:20px;width:111px;height:17px;background:#b8b8b8;border-top:1px solid #8c8c8c;border-left:1px solid #8c8c8c;border-bottom:1px solid #d8d8d8;border-right:1px solid #d8d8d8;font-size:12px;line-height:15px;padding-right:5px">OFF</div><svg style="position:absolute;left:126px;top:15px" width="9" height="11"><path d="M1.5 0.5V10" stroke="#6a6a6a"/><path d="M2 0.5L7.5 5.2L2 10Z" fill="#e8e8e8"/></svg></div>
<div style="position:absolute;left:0;top:448px;width:137px;height:1px;background:#6a6acc"></div><div style="position:absolute;left:0;top:449px;width:137px;height:2px;background:#303068"></div><div style="position:absolute;left:0;top:451px;width:138px;height:1px;background:#000"></div>
<div style="position:absolute;left:0;top:452px;width:137px;height:44px;background:#acacac;border-top:1px solid #f0f0f0;border-left:1px solid #f0f0f0;box-shadow:inset 0 -1px 0 #9c9c9c;color:#000;font-size:12.7px;text-align:center"><div style="position:absolute;left:0;right:0;top:4px;line-height:16px">Bandwidth</div><div style="position:absolute;left:13px;top:21px;width:111px;height:17px;background:#b8b8b8;border-top:1px solid #8c8c8c;border-left:1px solid #8c8c8c;border-bottom:1px solid #d8d8d8;border-right:1px solid #d8d8d8;font-size:12px;line-height:15px;padding-right:5px">ON</div></div>
<div style="position:absolute;left:0;top:497px;width:137px;height:46px;background:#6a6a6a;border-top:1px solid #8a8a8a;border-left:1px solid #8a8a8a;box-shadow:inset 0 -1px 0 #5a5a5a;color:#ffffff;font-size:12.7px;text-align:center"><div style="position:absolute;left:0;right:0;top:5px;line-height:16px">Bandwidth Value</div><div style="position:absolute;left:13px;top:22px;width:111px;height:17px;background:#6e6e6e;border-top:1px solid #555;border-left:1px solid #555;border-bottom:1px solid #888;border-right:1px solid #888;font-size:12px;line-height:15px;padding-right:5px">-32 dB</div></div>
<div style="position:absolute;left:0;top:544px;width:137px;height:46px;background:#acacac;border-top:1px solid #f0f0f0;border-left:1px solid #f0f0f0;box-shadow:inset 0 -1px 0 #9c9c9c;color:#000;font-size:12.7px;text-align:center"><div style="position:absolute;left:0;right:0;top:5px;line-height:16px">Notch</div><div style="position:absolute;left:13px;top:22px;width:111px;height:17px;background:#b8b8b8;border-top:1px solid #8c8c8c;border-left:1px solid #8c8c8c;border-bottom:1px solid #d8d8d8;border-right:1px solid #d8d8d8;font-size:12px;line-height:15px;padding-right:5px">OFF</div></div>
<div style="position:absolute;left:0;top:591px;width:137px;height:44px;background:#acacac;border-top:1px solid #f0f0f0;border-left:1px solid #f0f0f0;box-shadow:inset 0 -1px 0 #9c9c9c;color:#000;font-size:12.7px;text-align:center"><div style="position:absolute;left:0;right:0;top:4px;line-height:16px">Notch Value</div><div style="position:absolute;left:13px;top:21px;width:111px;height:17px;background:#b8b8b8;border-top:1px solid #8c8c8c;border-left:1px solid #8c8c8c;border-bottom:1px solid #d8d8d8;border-right:1px solid #d8d8d8;font-size:12px;line-height:15px;padding-right:5px">-3 dB</div></div>
<div style="position:absolute;left:0;top:636px;width:137px;height:1px;background:#6a6acc"></div><div style="position:absolute;left:0;top:637px;width:137px;height:2px;background:#303068"></div><div style="position:absolute;left:0;top:639px;width:138px;height:1px;background:#000"></div>
<div style="position:absolute;left:0;top:640px;width:137px;height:44px;background:#acacac;border-top:1px solid #f0f0f0;border-left:1px solid #f0f0f0;box-shadow:inset 0 -1px 0 #9c9c9c;color:#000;font-size:12.7px;text-align:center"><div style="position:absolute;left:0;right:0;top:13px;line-height:16px">Return</div></div>
<div style="position:absolute;left:0;top:685px;width:138px;height:21px;background:#3e3e3e;border-top:1px solid #555;border-left:1px solid #555;border-right:1px solid #222"></div></div>
</body></html>
